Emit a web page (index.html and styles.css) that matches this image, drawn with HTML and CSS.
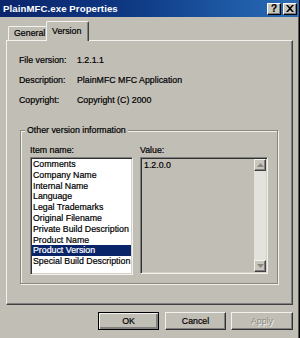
FILE: index.html
```html
<!DOCTYPE html>
<html>
<head>
<meta charset="utf-8">
<link rel="stylesheet" href="styles.css">
</head>
<body>
<div class="window">
  <div class="titlebar">
    <span class="title">PlainMFC.exe Properties</span>
    <div class="tb-btns">
      <span class="tb-btn">?</span>
      <span class="tb-btn"><svg width="8" height="7" viewBox="0 0 8 7"><path d="M0 0h2l2 2.3L6 0h2L5 3.5 8 7H6L4 4.7 2 7H0l3-3.5z" fill="#000"/></svg></span>
    </div>
  </div>
  <div class="tabs">
    <div class="tab">General</div>
    <div class="tab active">Version</div>
  </div>
  <div class="panel">
    <div class="props">
      <div class="row"><span class="k">File version:</span><span class="v">1.2.1.1</span></div>
      <div class="row"><span class="k">Description:</span><span class="v">PlainMFC MFC Application</span></div>
      <div class="row"><span class="k">Copyright:</span><span class="v">Copyright (C) 2000</span></div>
    </div>
    <fieldset class="group">
      <legend>Other version information</legend>
      <div class="group-body">
        <div class="col items">
          <div class="lbl">Item name:</div>
          <ul class="list">
            <li>Comments</li>
            <li>Company Name</li>
            <li>Internal Name</li>
            <li>Language</li>
            <li>Legal Trademarks</li>
            <li>Original Filename</li>
            <li>Private Build Description</li>
            <li>Product Name</li>
            <li class="sel">Product Version</li>
            <li>Special Build Description</li>
          </ul>
        </div>
        <div class="col values">
          <div class="lbl">Value:</div>
          <div class="valbox">
            <div class="valtext">1.2.0.0</div>
            <div class="scroll">
              <div class="sbtn"><svg width="7" height="4" viewBox="0 0 7 4"><path d="M3.5 0L7 4H0z" fill="#8a8780"/></svg></div>
              <div class="track"></div>
              <div class="sbtn"><svg width="7" height="4" viewBox="0 0 7 4"><path d="M0 0h7L3.5 4z" fill="#8a8780"/></svg></div>
            </div>
          </div>
        </div>
      </div>
    </fieldset>
  </div>
  <div class="buttons">
    <div class="btn default">OK</div>
    <div class="btn cancel">Cancel</div>
    <div class="btn disabled">Apply</div>
  </div>
</div>
</body>
</html>
```
FILE: styles.css
```css
* { box-sizing: border-box; }
html, body {
  margin: 0;
  padding: 0;
  background: #c1beb6;
  font-family: "Liberation Sans", Arial, sans-serif;
  font-size: 8.8px;
  color: #000;
  -webkit-text-stroke: 0.2px currentColor;
}
.window {
  width: 300px;
  height: 338px;
  background: #c1beb6;
  border-right: 1px solid #000;
  box-shadow: inset -1px 0 0 #5a5853;
  overflow: hidden;
}
.titlebar {
  height: 17px;
  display: flex;
  align-items: center;
  padding-left: 3px;
  padding-right: 2px;
  background: linear-gradient(90deg, #0b256c 0%, #0f3a84 45%, #1f5ca8 80%, #2a6ab4 100%);
}
.title {
  color: #fff;
  font-weight: bold;
  font-size: 9.6px;
  letter-spacing: 0.1px;
  -webkit-text-stroke: 0;
}
.tb-btns {
  margin-left: auto;
  display: flex;
  gap: 2px;
}
.tb-btn {
  width: 14px;
  height: 12px;
  background: #c9c6be;
  border: 1px solid;
  border-color: #fff #000 #000 #fff;
  box-shadow: inset -1px -1px 0 #808080;
  display: flex;
  align-items: center;
  justify-content: center;
  font-weight: bold;
  font-size: 10px;
  line-height: 1;
}
.tabs {
  margin-top: 4px;
  height: 19px;
  padding-left: 8px;
  display: flex;
  align-items: flex-end;
  position: relative;
  z-index: 1;
}
.tab {
  height: 14px;
  width: 40px;
  padding-left: 5px;
  line-height: 12px;
  background: #c1beb6;
  border-top: 1px solid #f2f2ee;
  border-left: 1px solid #f2f2ee;
  border-right: 1px solid #404040;
  border-radius: 2px 2px 0 0;
  box-shadow: inset -1px 0 0 #808080;
}
.tab.active {
  height: 20px;
  width: 43px;
  margin-left: -2px;
  margin-bottom: -1px;
  padding-left: 5px;
  line-height: 18px;
}
.panel {
  margin-left: 6px;
  width: 287px;
  height: 265px;
  border-top: 1px solid #f2f2ee;
  border-left: 1px solid #f2f2ee;
  border-right: 1px solid #404040;
  border-bottom: 1px solid #404040;
  box-shadow: inset -1px -1px 0 #808080;
  padding: 9px 0 0 12px;
}
.props .row {
  display: flex;
  height: 20px;
  align-items: center;
}
.props .k { width: 58px; }
.group {
  margin: 15px 0 0 1px;
  padding: 0;
  width: 258px;
  height: 159px;
  border: 1px solid #8a8780;
  box-shadow: inset 1px 1px 0 #f2f2ee, 1px 1px 0 #f2f2ee;
}
.group legend {
  margin-left: 4px;
  padding: 0 2px;
  line-height: 11px;
  background: #c1beb6;
}
.group-body {
  display: flex;
  gap: 7px;
  padding: 9px 9px 0 9px;
}
.lbl {
  line-height: 11px;
  margin-bottom: 1px;
}
.list {
  list-style: none;
  margin: 0;
  width: 103px;
  height: 118px;
  background: #fff;
  border: 1px solid;
  border-color: #808080 #f2f2ee #f2f2ee #808080;
  box-shadow: inset 1px 1px 0 #303030, inset -1px -1px 0 #d4d0c8;
  padding: 1px;
}
.list li {
  height: 10.8px;
  line-height: 10.8px;
  padding-left: 1px;
  white-space: nowrap;
}
.list li.sel {
  background: #0a246a;
  color: #fff;
}
.valbox {
  width: 128px;
  height: 117px;
  display: flex;
  background: #c1beb6;
  border: 1px solid;
  border-color: #808080 #f2f2ee #f2f2ee #808080;
  box-shadow: inset 1px 1px 0 #303030, inset -1px -1px 0 #d4d0c8;
  padding: 1px;
}
.valtext {
  flex: 1;
  padding: 1px 0 0 2px;
  line-height: 10.8px;
}
.scroll {
  width: 12px;
  display: flex;
  flex-direction: column;
  background: #e4e2dc;
}
.track { flex: 1; }
.sbtn {
  height: 12px;
  background: #c9c6be;
  border: 1px solid;
  border-color: #f2f2ee #404040 #404040 #f2f2ee;
  box-shadow: inset -1px -1px 0 #808080;
  display: flex;
  align-items: center;
  justify-content: center;
}
.buttons {
  display: flex;
  justify-content: flex-end;
  margin-top: 7px;
  padding-right: 6px;
}
.btn {
  width: 61px;
  height: 18px;
  display: flex;
  align-items: center;
  justify-content: center;
  border: 1px solid;
  border-color: #f2f2ee #303030 #303030 #f2f2ee;
  box-shadow: inset -1px -1px 0 #808080;
  background: #c1beb6;
}
.btn.default {
  border: 1px solid #000;
  box-shadow: inset 1px 1px 0 #f2f2ee, inset -2px -2px 0 #808080;
  margin-right: 6px;
}
.btn.cancel { margin-right: 5px; }
.btn.disabled {
  width: 62px;
  color: #8a8780;
  text-shadow: 1px 1px 0 #f2f2ee;
  -webkit-text-stroke: 0;
}
```
